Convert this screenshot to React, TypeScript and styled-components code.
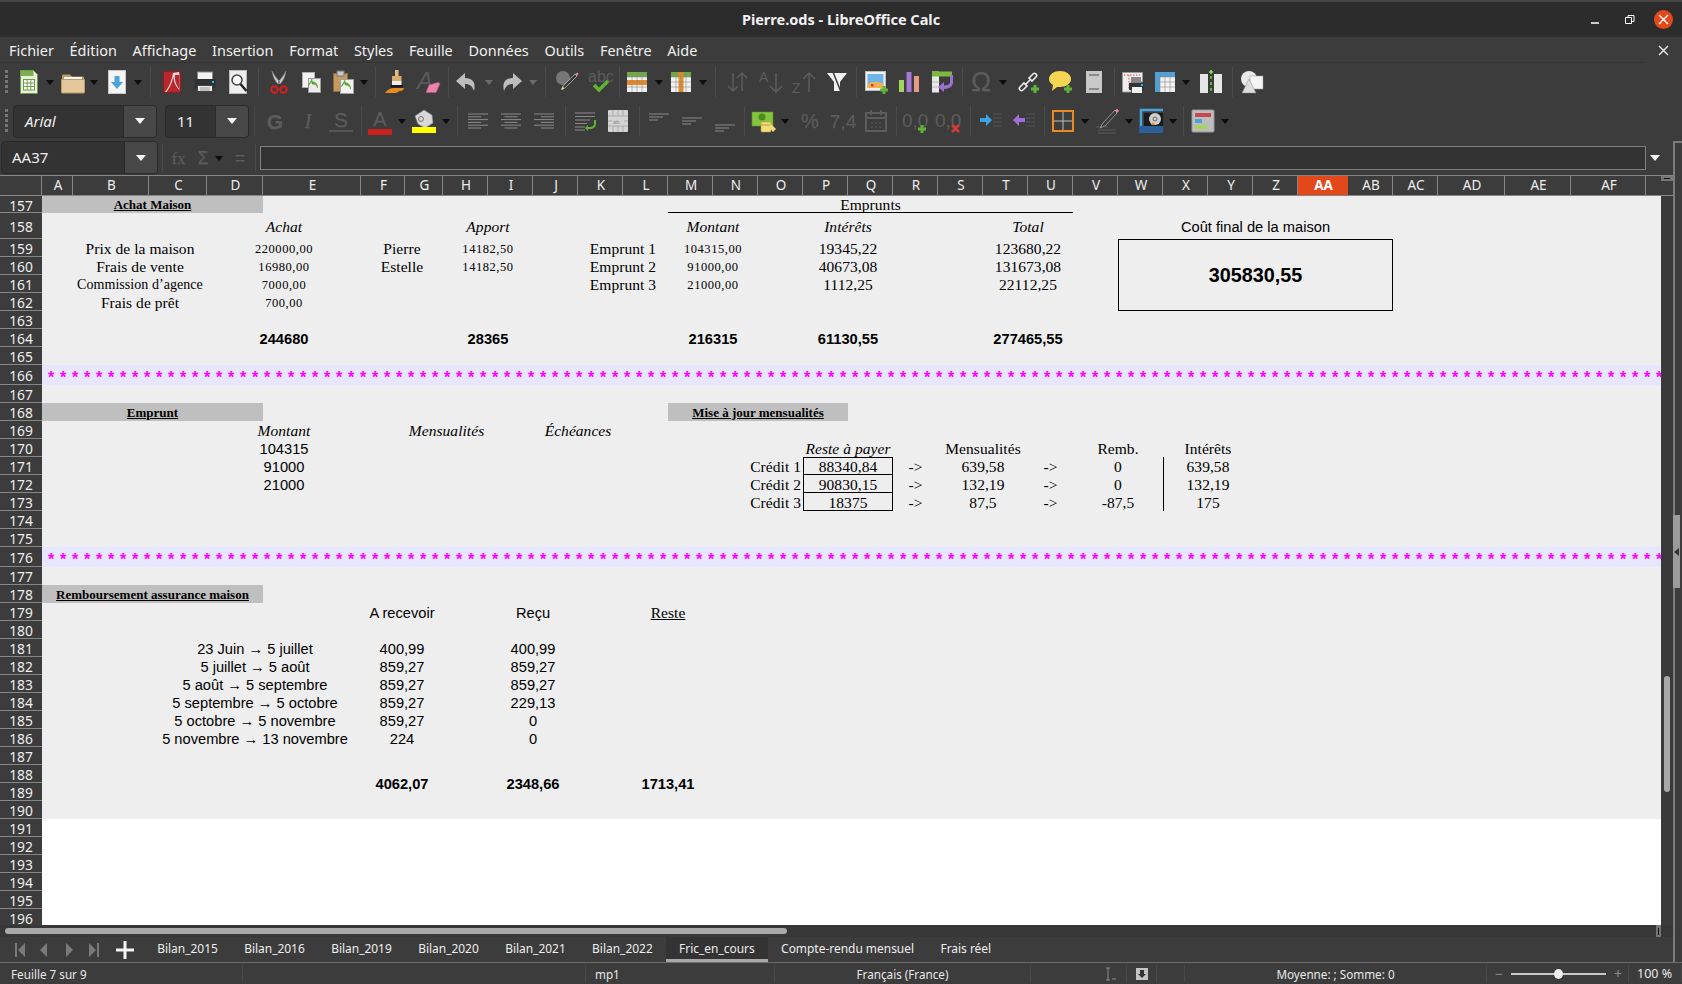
import React from "react";
import styled, { createGlobalStyle, css } from "styled-components";

const UI_FONT = `"Noto Sans", "Open Sans", sans-serif`;
const SERIF = `"Liberation Serif", serif`;
const SANS = `"Liberation Sans", sans-serif`;

const GlobalStyle = createGlobalStyle`
  html, body { margin: 0; padding: 0; background: #3c3c3c; }
  #root { width: 1682px; height: 984px; overflow: hidden; }
`;

const COLUMNS: [string, number][] = [
  ["A", 31], ["B", 76], ["C", 58], ["D", 56], ["E", 98], ["F", 44], ["G", 38], ["H", 45],
  ["I", 45], ["J", 45], ["K", 45], ["L", 45], ["M", 45], ["N", 45], ["O", 45], ["P", 45],
  ["Q", 45], ["R", 45], ["S", 45], ["T", 45], ["U", 45], ["V", 45], ["W", 45], ["X", 45],
  ["Y", 45], ["Z", 45], ["AA", 50], ["AB", 45], ["AC", 45], ["AD", 67], ["AE", 66], ["AF", 75],
];
const COL_NAMES = COLUMNS.map((c) => c[0]);

const rowHeight = (n: number) => (n === 157 ? 17 : n === 158 ? 26 : n === 166 || n === 176 ? 20 : 18);
const ROW_NUMBERS = Array.from({ length: 40 }, (_, i) => 157 + i);
const SHEET_ROWS = ROW_NUMBERS.filter((n) => n <= 190);

const App = styled.div`
  width: 1682px;
  height: 984px;
  display: flex;
  flex-direction: column;
  background: #3c3c3c;
  color: #eeeeee;
  font-family: ${UI_FONT};
  overflow: hidden;
`;

const TitleBar = styled.div`
  height: 37px;
  box-sizing: border-box;
  border-top: 2px solid #454545;
  padding-bottom: 2px;
  background: #2c2c2c;
  display: flex;
  align-items: center;
  justify-content: center;
  position: relative;
  font-size: 14.5px;
  font-weight: 700;
  color: #f2f2f2;
`;

const WindowButtons = styled.div`
  position: absolute;
  right: 9px;
  top: 0;
  height: 35px;
  display: flex;
  align-items: center;
  gap: 15px;
`;

const WinButton = styled.div<{ $close?: boolean }>`
  width: 19px;
  height: 19px;
  border-radius: 50%;
  display: flex;
  align-items: center;
  justify-content: center;
  background: ${(p) => (p.$close ? "#e2481a" : "transparent")};
`;

const MenuBar = styled.div`
  height: 26px;
  display: flex;
  align-items: center;
  padding-left: 9px;
  gap: 15.7px;
  position: relative;
  font-size: 14.45px;
  color: #f0f0f0;
  &::after {
    content: "";
    position: absolute;
    left: 0;
    width: 1645px;
    bottom: 0;
    height: 1px;
    background: #353535;
  }
`;

const MenuItem = styled.span`
  white-space: nowrap;
`;

const CloseDoc = styled.div`
  margin-left: auto;
  margin-right: 13px;
  display: flex;
`;

const ToolRow = styled.div<{ $h: number }>`
  height: ${(p) => p.$h}px;
  display: flex;
  align-items: center;
  padding-left: 5px;
`;

const Grip = styled.div<{ $mr: number }>`
  width: 3px;
  height: 24px;
  margin-right: ${(p) => p.$mr}px;
  background: repeating-linear-gradient(to bottom, #757575 0 3px, transparent 3px 5px);
`;

const Tool = styled.div<{ $w?: number }>`
  width: ${(p) => p.$w ?? 33}px;
  flex: none;
  height: 24px;
  display: flex;
  align-items: center;
  justify-content: center;
`;

const Drop = styled.div<{ $w?: number; $dim?: boolean }>`
  width: ${(p) => p.$w ?? 11}px;
  flex: none;
  height: 24px;
  display: flex;
  align-items: center;
  &::before {
    content: "";
    margin-left: 1px;
    border-left: 4px solid transparent;
    border-right: 4px solid transparent;
    border-top: 5px solid ${(p) => (p.$dim ? "#6c6c6c" : "#0c0c0c")};
  }
`;

const Sep = styled.div<{ $w: number }>`
  width: ${(p) => p.$w}px;
  flex: none;
  height: 30px;
  position: relative;
  &::after {
    content: "";
    position: absolute;
    left: 50%;
    top: 0;
    bottom: 0;
    width: 1px;
    background: #4a4a4a;
  }
`;

const Combo = styled.div<{ $w: number; $ml?: number; $mt?: number }>`
  width: ${(p) => p.$w}px;
  flex: none;
  margin-left: ${(p) => p.$ml ?? 0}px;
  margin-top: ${(p) => p.$mt ?? 0}px;
  box-sizing: border-box;
  border: 1px solid #2a2a2a;
  border-radius: 4px;
  background: #333333;
  display: flex;
  align-items: stretch;
  overflow: hidden;
  font-size: 15px;
  color: #eeeeee;
`;

const ComboText = styled.div<{ $it?: boolean; $pl: number; $h: number }>`
  flex: 1;
  height: ${(p) => p.$h}px;
  box-sizing: border-box;
  padding-bottom: 1px;
  display: flex;
  align-items: center;
  padding-left: ${(p) => p.$pl}px;
  font-style: ${(p) => (p.$it ? "italic" : "normal")};
`;

const ComboButton = styled.div`
  width: 32px;
  background: #484848;
  border-left: 1px solid #2a2a2a;
  display: flex;
  align-items: center;
  justify-content: center;
  &::before {
    content: "";
    border-left: 5.5px solid transparent;
    border-right: 5.5px solid transparent;
    border-top: 6px solid #f4f4f4;
  }
`;

const Glyph = styled.span<{ $it?: boolean; $bold?: boolean; $size?: number; $font?: string; $color?: string }>`
  font-family: ${(p) => p.$font ?? SANS};
  font-style: ${(p) => (p.$it ? "italic" : "normal")};
  font-weight: ${(p) => (p.$bold ? 700 : 400)};
  font-size: ${(p) => p.$size ?? 20}px;
  color: ${(p) => p.$color ?? "#5c5c5c"};
  line-height: 1;
  white-space: nowrap;
  text-shadow: 0 1px 0 rgba(255, 255, 255, 0.06);
`;

const ColorGlyph = styled.div`
  width: 24px;
  height: 24px;
  display: flex;
  flex-direction: column;
  align-items: center;
`;

const ColorBar = styled.div<{ $c: string; $h?: number; $mt?: number }>`
  width: 24px;
  height: ${(p) => p.$h ?? 6}px;
  margin-top: ${(p) => p.$mt ?? 0}px;
  flex: none;
  background: ${(p) => p.$c};
`;

const Workspace = styled.div`
  height: 821px;
  display: flex;
`;

const Main = styled.div`
  width: 1673px;
  display: flex;
  flex-direction: column;
`;

const RightStrip = styled.div`
  width: 9px;
  box-sizing: border-box;
  border-left: 2px solid #7b7b7b;
  border-top: 2px solid #7b7b7b;
  position: relative;
`;

const DeckHandle = styled.div`
  position: absolute;
  left: -2px;
  top: 372px;
  width: 7px;
  height: 73px;
  background: #9c9c9c;
  display: flex;
  align-items: center;
  justify-content: center;
  &::before {
    content: "";
    border-top: 4px solid transparent;
    border-bottom: 4px solid transparent;
    border-right: 5px solid #333333;
  }
`;

const FormulaBar = styled.div`
  height: 34px;
  display: flex;
  align-items: center;
  padding-left: 1px;
`;

const FxButton = styled.div<{ $w: number }>`
  width: ${(p) => p.$w}px;
  flex: none;
  display: flex;
  justify-content: center;
`;

const FormulaSep = styled.div<{ $w: number }>`
  width: ${(p) => p.$w}px;
  flex: none;
  height: 28px;
  position: relative;
  &::after {
    content: "";
    position: absolute;
    left: 50%;
    top: 0;
    bottom: 0;
    width: 1px;
    background: #4a4a4a;
  }
`;

const FormulaInput = styled.div`
  width: 1386px;
  flex: none;
  height: 24px;
  box-sizing: border-box;
  border: 1px solid #7f7f7f;
  background: #333333;
`;

const FormulaDrop = styled.div`
  margin-left: 4px;
  border-left: 5.5px solid transparent;
  border-right: 5.5px solid transparent;
  border-top: 6px solid #f4f4f4;
`;

const ColHeaderRow = styled.div`
  height: 21px;
  box-sizing: border-box;
  border-top: 1px solid #868686;
  border-bottom: 1px solid #868686;
  display: flex;
  position: relative;
`;

const Corner = styled.div`
  width: 42px;
  flex: none;
  border-right: 1px solid #868686;
  box-sizing: border-box;
`;

const ColLabel = styled.div<{ $w: number; $on?: boolean }>`
  width: ${(p) => p.$w}px;
  flex: none;
  box-sizing: border-box;
  padding-left: 2px;
  border-right: 1px solid ${(p) => (p.$on ? "#e2481a" : "#868686")};
  background: ${(p) => (p.$on ? "#e2481a" : "transparent")};
  color: ${(p) => (p.$on ? "#ffffff" : "#eeeeee")};
  font-weight: ${(p) => (p.$on ? 700 : 400)};
  font-size: 13.5px;
  line-height: 19px;
  text-align: center;
`;

const SplitHandle = styled.div`
  position: absolute;
  left: 1661px;
  top: 0;
  width: 12px;
  height: 5px;
  background: #767676;
  display: flex;
  align-items: center;
  justify-content: center;
  &::before {
    content: "";
    width: 6px;
    height: 1px;
    background: #111111;
  }
`;

const SheetArea = styled.div`
  height: 729px;
  display: flex;
  overflow: hidden;
`;

const RowHeaders = styled.div`
  width: 42px;
  flex: none;
  display: flex;
  flex-direction: column;
`;

const RowLabel = styled.div<{ $h: number }>`
  height: ${(p) => p.$h}px;
  flex: none;
  box-sizing: border-box;
  border-bottom: 1px solid #868686;
  padding-top: 2px;
  display: flex;
  align-items: center;
  justify-content: center;
  font-size: 13.8px;
  color: #eeeeee;
`;

const Sheet = styled.div`
  width: 1619px;
  flex: none;
  background: #ffffff;
`;

const SheetGrid = styled.div`
  display: grid;
  grid-template-columns: ${COLUMNS.map((c) => `${c[1]}px`).join(" ")} 15px;
  grid-template-rows: ${SHEET_ROWS.map((n) => `${rowHeight(n)}px`).join(" ")};
  background: #eeeeee;
  color: #000000;
  white-space: nowrap;
`;

type CellProps = { $c: string; $s?: number; $r: number; $rs?: number };

const cellPlace = css<CellProps>`
  grid-column: ${(p) => COL_NAMES.indexOf(p.$c) + 1} / span ${(p) => p.$s ?? 1};
  grid-row: ${(p) => p.$r - 156} / span ${(p) => p.$rs ?? 1};
  box-sizing: border-box;
  padding-top: 2px;
  display: flex;
  align-items: center;
  justify-content: center;
`;

const Serif = styled.div<CellProps>`
  ${cellPlace};
  font-family: ${SERIF};
  font-size: 15.5px;
  letter-spacing: 0.05px;
`;

const SerifItalic = styled(Serif)`
  font-style: italic;
`;

const SmallSerif = styled(Serif)`
  font-size: 12.5px;
  letter-spacing: 0.55px;
`;

const NarrowSerif = styled(Serif)`
  font-size: 14px;
`;

const CreditLabel = styled(Serif)`
  justify-content: flex-end;
  padding-right: 2px;
`;

const Sans = styled.div<CellProps>`
  ${cellPlace};
  font-family: ${SANS};
  font-size: 14.67px;
`;

const SansBold = styled(Sans)`
  font-weight: 700;
`;

const SectionHead = styled.div<CellProps>`
  ${cellPlace};
  padding-top: 1px;
  background: #bfbfbf;
  font-family: ${SERIF};
  font-size: 13px;
  font-weight: 700;
  text-decoration: underline;
`;

const UnderlinedSerif = styled(Serif)`
  text-decoration: underline;
`;

const RuledHead = styled(Serif)`
  border-bottom: 1px solid #000000;
`;

const CostBox = styled(SansBold)`
  border: 1px solid #000000;
  padding-top: 0;
  font-size: 19.8px;
`;

const CreditBox = styled(Serif)<{ $top?: boolean }>`
  border: 1px solid #000000;
  border-top-width: ${(p) => (p.$top ? 1 : 0)}px;
`;

const RuleCell = styled.div<CellProps>`
  ${cellPlace};
  justify-content: flex-start;
  align-items: stretch;
  border-left: 1px solid #000000;
`;

const StarBand = styled.div<{ $r: number }>`
  grid-column: 1 / -1;
  grid-row: ${(p) => p.$r - 156};
  background: #e6e6ff;
  color: #ff00ff;
  font-family: ${SANS};
  font-weight: 700;
  font-size: 16px;
  letter-spacing: 0.664px;
  line-height: 26px;
  padding-left: 6px;
  overflow: hidden;
  white-space: pre;
`;

const VScroll = styled.div`
  width: 12px;
  flex: none;
  background: #3a3a3a;
  box-sizing: border-box;
  padding: 480px 3px 0;
`;

const VThumb = styled.div`
  height: 116px;
  border-radius: 3px;
  background: #a8a8a8;
`;

const HScrollRow = styled.div`
  height: 12px;
  flex: none;
  background: #373737;
  display: flex;
  align-items: center;
  padding-left: 5px;
`;

const HThumb = styled.div`
  width: 782px;
  height: 6px;
  border-radius: 3px;
  background: #a9a9a9;
`;

const HHandle = styled.div`
  width: 5px;
  height: 12px;
  margin-left: auto;
  margin-right: 12px;
  background: #767676;
  display: flex;
  align-items: center;
  justify-content: center;
  &::before {
    content: "";
    width: 1px;
    height: 7px;
    background: #111111;
  }
`;

const TabBar = styled.div`
  height: 25px;
  flex: none;
  display: flex;
  align-items: stretch;
  font-size: 11.95px;
`;

const TabNav = styled.div`
  width: 144px;
  flex: none;
  display: flex;
  align-items: center;
  padding-left: 14px;
  box-sizing: border-box;
`;

const NavButton = styled.div<{ $w: number }>`
  width: ${(p) => p.$w}px;
  flex: none;
  display: flex;
`;

const AddTab = styled.div`
  margin-left: 4px;
  display: flex;
`;

const Tab = styled.div<{ $active?: boolean }>`
  padding: 1px 13.2px 0;
  display: flex;
  align-items: center;
  box-sizing: border-box;
  white-space: nowrap;
  color: #eeeeee;
  background: ${(p) => (p.$active ? "#333333" : "transparent")};
  border-bottom: 3px solid ${(p) => (p.$active ? "#a8a8a8" : "transparent")};
`;

const StatusBar = styled.div`
  height: 22px;
  box-sizing: border-box;
  border-top: 1px solid #6e6e6e;
  display: flex;
  align-items: center;
  font-size: 11.7px;
  color: #e8e8e8;
`;

const StatusCell = styled.div<{ $w: number; $center?: boolean; $pl?: number; $fs?: number }>`
  width: ${(p) => p.$w}px;
  flex: none;
  height: 17px;
  box-sizing: border-box;
  border-right: 1px solid #484848;
  display: flex;
  align-items: center;
  justify-content: ${(p) => (p.$center ? "center" : "flex-start")};
  padding-left: ${(p) => p.$pl ?? 0}px;
  font-size: ${(p) => (p.$fs ? `${p.$fs}px` : "inherit")};
  white-space: nowrap;
  gap: 6px;
`;

const ZoomTrack = styled.div`
  width: 95px;
  height: 2px;
  margin: 0 2px;
  background: #c8c8c8;
  position: relative;
`;

const ZoomKnob = styled.div`
  position: absolute;
  left: 43px;
  top: -4px;
  width: 9px;
  height: 10px;
  border-radius: 50%;
  background: #eeeeee;
`;

const ZoomSign = styled.span`
  color: #8c8c8c;
  font-size: 14px;
  line-height: 1;
`;

const Svg = styled.svg.attrs({ viewBox: "0 0 24 24", width: 24, height: 24 })`
  display: block;
  flex: none;
  overflow: visible;
`;

const Grey = "#5c5c5c";

const NewCalcIcon = () => (
  <Svg>
    <path d="M3.5.5h13l4 4v19h-17z" fill="#e9efdf" stroke="#6d9e49" />
    <path d="M4 1h12.5v5H4z" fill="#7fae4f" />
    <rect x="6.5" y="9.5" width="11" height="10.5" fill="#fff" stroke="#6d9e49" />
    <path d="M6.5 13h11M6.5 16.5h11M10.2 9.5v10.5M13.8 9.5v10.5" stroke="#6d9e49" fill="none" />
  </Svg>
);

const FolderIcon = () => (
  <Svg>
    <path d="M1 5.5a1 1 0 0 1 1-1h7l2 2h11a1 1 0 0 1 1 1V10H1z" fill="#b89968" />
    <rect x="3" y="7" width="18" height="4" fill="#f4f4f4" />
    <path d="M.5 9.5h23V22a1 1 0 0 1-1 1H1.5a1 1 0 0 1-1-1z" fill="#e4c79a" stroke="#b89968" />
  </Svg>
);

const SaveIcon = () => (
  <Svg>
    <rect x="3.5" y=".5" width="17" height="23" fill="#f4f4f4" stroke="#c8c8c8" />
    <path d="M9.5 6h5v6h3.500L12 19l-6-7h3.500z" fill="#4aa3df" />
  </Svg>
);

const PdfIcon = () => (
  <Svg>
    <rect x="3.5" y="1.5" width="17" height="21" fill="#b8272c" stroke="#8f1c20" />
    <path d="M19 2l-6 1c-1 6-3 13-8 19h1.500c4-5 6-11 7-16 0 5 2 11 6 14V6z" fill="#f2dcdc" />
    <path d="M15 5c-.5 4 .5 10 4.500 14V5z" fill="#b8272c" />
  </Svg>
);

const PrintIcon = () => (
  <Svg>
    <rect x="4.500" y="2" width="15" height="8" fill="#f4f4f4" stroke="#888" />
    <path d="M1.500 11a2 2 0 0 1 2-2h17a2 2 0 0 1 2 2v7h-21z" fill="#2c3136" />
    <rect x="19" y="11" width="2" height="2" fill="#33b5e5" />
    <rect x="4.500" y="15.500" width="15" height="6" fill="#e8e8e8" stroke="#444" />
    <path d="M7 18h10M7 20h10" stroke="#999" />
  </Svg>
);

const PreviewIcon = () => (
  <Svg>
    <rect x="3.500" y=".5" width="17" height="23" fill="#eeeeee" stroke="#bbbbbb" />
    <circle cx="11" cy="10" r="5" fill="#f8f8f8" stroke="#444" strokeWidth="1.500" />
    <path d="M14.500 14l6 7" stroke="#222" strokeWidth="2.500" />
  </Svg>
);

const CutIcon = () => (
  <Svg>
    <path d="M5 1c1 6 3 10 6 13l2-2C10 9 7 5 5 1zM19 1c-1 6-3 10-6 13l-2-2c3-3 6-7 8-11z" fill="#c8c8c8" stroke="#8a8a8a" strokeWidth=".5" />
    <circle cx="7.500" cy="19.500" r="3.200" fill="none" stroke="#d81f1f" strokeWidth="2" />
    <circle cx="16.500" cy="19.500" r="3.200" fill="none" stroke="#d81f1f" strokeWidth="2" />
  </Svg>
);

const greenArrow = "M8 15l4-4.500v2.500c3 0 5 1 5.500 4 .3-3-1-6-5.500-6.500V8z";

const CopyIcon = () => (
  <Svg>
    <rect x="3.500" y="2.500" width="12" height="15" fill="#f4f4f4" stroke="#b0b0b0" />
    <rect x="9.500" y="8.500" width="12" height="14" fill="#ececec" stroke="#9c9c9c" />
    <path d={greenArrow} fill="#5fb336" stroke="#3f8a1e" strokeWidth=".4" transform="translate(1 1)" />
  </Svg>
);

const PasteIcon = () => (
  <Svg>
    <rect x="2.500" y="3.500" width="14" height="18" fill="#c49a5e" stroke="#8e6c3c" />
    <rect x="6" y="1" width="7" height="5" fill="#c8c8c8" stroke="#777" />
    <rect x="9.500" y="9.500" width="13" height="14" fill="#f2f2f2" stroke="#a0a0a0" />
    <path d={greenArrow} fill="#5fb336" stroke="#3f8a1e" strokeWidth=".4" transform="translate(2 2)" />
  </Svg>
);

const CloneIcon = () => (
  <Svg>
    <rect x="11" y="0" width="3.500" height="6" fill="#e3be84" />
    <path d="M8 6h9.500v5H8z" fill="#d9ae6c" />
    <rect x="8" y="11" width="9.500" height="4" fill="#eeeeee" />
    <rect x="6.500" y="15" width="12.500" height="2.500" fill="#1c1c1c" />
    <path d="M1 23c2-3 5-5 9-5h10c0 2-2 3-4 3-1 0-3 2-5 2z" fill="#e98a1f" />
  </Svg>
);

const ClearIcon = () => (
  <Svg>
    <text x="0" y="19" fontFamily={SANS} fontSize="24" fontStyle="italic" fill="#5a5a5a">A</text>
    <path d="M12 15l9-2.500 2 1-4 9H9z" fill="#ee82ac" stroke="#c85a88" strokeWidth=".6" />
  </Svg>
);

const UndoIcon = ({ flip }: { flip?: boolean }) => (
  <Svg>
    <path
      transform={flip ? "matrix(-1 0 0 1 24 0)" : undefined}
      d="M10 3L1 11l9 8v-5c5 0 7 2 9 7 2-8-1-13-9-13z"
      fill="#bdbdbd"
    />
  </Svg>
);

const FindIcon = () => (
  <Svg>
    <circle cx="8" cy="8" r="7" fill="#777777" />
    <path d="M22 6l-12 12-3 1 1-3L20 4z" fill="#3a3a3a" stroke="#ddd" strokeWidth=".6" />
    <path d="M20 4l2.500-1.500 1 1.500-1.500 2z" fill="#ee82ac" />
    <path d="M8 16l-2 4 3-1z" fill="#f0e0a0" />
  </Svg>
);

const SpellIcon = () => (
  <Svg>
    <text x="0" y="12" fontFamily={SANS} fontSize="16" fill={Grey}>abc</text>
    <path d="M6 15l5 5 9-9" fill="none" stroke="#5fb336" strokeWidth="3.500" />
  </Svg>
);

const TableIcon = ({ mode }: { mode: "row" | "col" | "freeze" }) => {
  const head = mode === "freeze" ? "#4aa3df" : "#6fa845";
  return (
    <Svg>
      <rect x="2" y="2" width="20" height="20" fill="#f2f2f2" />
      <rect x="2" y="2" width="20" height="5" fill={head} />
      {mode === "row" && <rect x="2" y="10" width="20" height="5" fill="#ed8a1f" />}
      {mode === "col" && <rect x="9.500" y="2" width="5" height="20" fill="#ed8a1f" />}
      {mode === "freeze" && <rect x="2" y="2" width="5" height="20" fill="#4aa3df" />}
      <path d="M2 7h20M2 12h20M2 17h20M7 2v20M12 2v20M17 2v20" stroke="#8a8a8a" strokeWidth=".6" />
    </Svg>
  );
};

const SortIcon = () => (
  <Svg>
    <path d="M7 3v18M2 16l5 5 5-5M16 21V3M11 8l5-5 5 5" fill="none" stroke={Grey} strokeWidth="1.500" />
  </Svg>
);

const SortAscIcon = ({ letter, up }: { letter: string; up?: boolean }) => (
  <Svg>
    <text x="0" y={up ? 23 : 12} fontFamily={SANS} fontSize="14" fill={Grey}>{letter}</text>
    {up ? (
      <path d="M17 22V3M11 9l6-6 6 6" fill="none" stroke={Grey} strokeWidth="1.500" />
    ) : (
      <path d="M17 3v19M11 16l6 6 6-6" fill="none" stroke={Grey} strokeWidth="1.500" />
    )}
  </Svg>
);

const FilterIcon = () => (
  <Svg>
    <path d="M2 3h20l-7 9v9H9v-9z" fill="#f2f2f2" />
    <path d="M8 2l8 20" stroke="#3c3c3c" strokeWidth="1.500" />
  </Svg>
);

const PlusMark = ({ x = 16, y = 16, c = "#5fb336" }: { x?: number; y?: number; c?: string }) => (
  <path d={`M${x + 2.5} ${y}h3v2.500h2.500v3H${x + 5.5}v2.500h-3v-2.500H${x}v-3h2.500z`} fill={c} />
);

const ImageIcon = () => (
  <Svg>
    <rect x="1.500" y="1.500" width="20" height="19" fill="#f2f2f2" stroke="#bbb" />
    <rect x="3.500" y="4" width="16" height="14" fill="#6db4e8" />
    <path d="M3.500 18v-4c5-3 11-3 16 0v4z" fill="#f0b050" />
    <rect x="7" y="14" width="2.500" height="2.500" fill="#d33" />
    <PlusMark />
  </Svg>
);

const ChartIcon = () => (
  <Svg>
    <rect x="2" y="10" width="5" height="12" fill="#a3d45c" />
    <rect x="9.500" y="2" width="5" height="20" fill="#a678d8" />
    <rect x="17" y="6" width="5" height="16" fill="#e89a84" />
  </Svg>
);

const PivotIcon = () => (
  <Svg>
    <rect x="2" y="1.500" width="7" height="21" fill="#e8e8e8" />
    <rect x="2" y="1.500" width="20" height="5" fill="#7fb83f" />
    <path d="M9 12h1M9 17h1M2 12h7M2 17h7" stroke="#999" strokeWidth=".6" />
    <path d="M20 7v7c0 2.500-3 3.500-6 3.500V14l-6 5 6 5v-3c6 0 9-3 9-7V7z" transform="translate(0 -2)" fill="#9a70d0" />
  </Svg>
);

const LinkIcon = () => (
  <Svg>
    <path d="M4 17l4-4 3 3-4 4a2.100 2.100 0 0 1-3-3zM13 8l4-4a2.100 2.100 0 0 1 3 3l-4 4z" fill="none" stroke="#ececec" strokeWidth="1.600" />
    <path d="M9 15l6-6" stroke="#ececec" strokeWidth="1.600" />
    <PlusMark x={15} y={15} />
  </Svg>
);

const CommentIcon = () => (
  <Svg>
    <path d="M11 1c6 0 11 3.500 11 8s-5 8-11 8H8l-5 4 1-6C1.500 13.500 0 11.500 0 9c0-4.500 5-8 11-8z" fill="#f5d552" />
    <PlusMark x={15} y={15} />
  </Svg>
);

const HeaderIcon = () => (
  <Svg>
    <rect x="4" y="1" width="16" height="22" fill="#c8c8c8" />
    <path d="M7 5h10M7 19h10" stroke="#8a8a8a" strokeWidth="2" />
  </Svg>
);

const PrintAreaIcon = () => (
  <Svg>
    <path d="M1.500 2.500h20V12H10v10H1.500z" fill="#eeeeee" stroke="#999" />
    <path d="M3 5h16M8 5v15" stroke="#dd4444" strokeDasharray="1.500 1.500" />
    <rect x="10" y="7" width="10" height="6" fill="#888" />
    <rect x="8" y="13" width="15" height="7" fill="#30353a" />
    <rect x="11" y="17" width="10" height="6" fill="#f2f2f2" />
    <rect x="20" y="14" width="2" height="2" fill="#33b5e5" />
  </Svg>
);

const SplitIcon = () => (
  <Svg>
    <rect x="1" y="4" width="8" height="19" fill="#e6e6e6" />
    <rect x="15" y="4" width="8" height="19" fill="#e6e6e6" />
    <path d="M12 0v24" stroke="#5fb336" strokeWidth="2" strokeDasharray="3 3" />
    <path d="M10 2h4M12 0v4" stroke="#8fd94f" strokeWidth="1.500" />
  </Svg>
);

const ShapesIcon = () => (
  <Svg>
    <circle cx="9" cy="9" r="8" fill="#e8e8e8" />
    <rect x="10" y="6" width="13" height="13" fill="#f4f4f4" stroke="#999" strokeWidth=".5" />
    <path d="M9 9l7 14H2z" fill="#dddddd" stroke="#888" strokeWidth=".5" />
  </Svg>
);

const BucketIcon = () => (
  <Svg>
    <path d="M3 7l9-6 8 5 1 8-8 5-7-4z" fill="#d8d8d8" stroke="#888" strokeWidth=".6" />
    <circle cx="9" cy="10" r="2.500" fill="none" stroke="#777" />
    <path d="M12 19l2 4h-4z" fill="#ef8a1f" />
  </Svg>
);

const AlignIcon = ({ a }: { a: "l" | "c" | "r" }) => {
  const rows = [20, 13, 20, 13, 20, 13].map((w, i) => {
    const x = a === "l" ? 2 : a === "c" ? 12 - w / 2 : 22 - w;
    return <path key={i} d={`M${x} ${5 + i * 2.8}h${w}`} stroke="#8a8a8a" strokeWidth="1" />;
  });
  return <Svg>{rows}</Svg>;
};

const WrapIcon = () => (
  <Svg>
    <path d="M2 4h20M2 7.500h20M2 11h15M2 14.500h12M2 18h10M2 21h10" stroke="#8a8a8a" />
    <path d="M21 12v4c0 2-2 3-4 3h-2v-2l-3 3 3 3v-2h2c3 0 6-2 6-5v-4z" fill="#5fb336" transform="translate(0 -1)" />
  </Svg>
);

const MergeIcon = () => (
  <Svg>
    <rect x="2" y="1" width="20" height="22" rx="1" fill="#d4d4d4" />
    <path d="M2 7h20M2 12h4M18 12h4M2 17h20M7 1v6M12 1v6M17 1v6M7 17v6M12 17v6M17 17v6" stroke="#aaa" />
    <text x="7" y="15" fontSize="6" fontFamily={SANS} fill="#888">ab</text>
  </Svg>
);

const VAlignIcon = ({ y }: { y: number }) => (
  <Svg>
    <path d={`M2 ${y}h20M2 ${y + 3}h14M2 ${y + 6}h9`} stroke="#8a8a8a" />
  </Svg>
);

const CurrencyIcon = () => (
  <Svg>
    <rect x="0" y="3" width="21" height="14" fill="#86c440" stroke="#5c9426" strokeWidth=".6" />
    <circle cx="10" cy="8" r="3.500" fill="#4d8a1e" />
    <rect x="9" y="13" width="10" height="10" rx="1" fill="#f4dd80" stroke="#b89c30" strokeWidth=".6" />
    <path d="M9 16h10" stroke="#b89c30" />
    <path d="M19 15l5 5-3 3-4-5z" fill="#f2d878" />
  </Svg>
);

const DateIcon = () => (
  <Svg>
    <rect x="2" y="4" width="20" height="18" fill="none" stroke={Grey} strokeWidth="2" />
    <path d="M7 1v5M17 1v5M3 9h18" stroke={Grey} strokeWidth="2" />
    <path d="M7 14h2M11 14h2M15 14h2M7 18h2M11 18h2M15 18h2" stroke={Grey} />
  </Svg>
);

const DecIcon = ({ add }: { add?: boolean }) => (
  <Svg>
    <text x="-1" y="18" fontSize="19" fontFamily={SANS} fill={Grey}>0,0</text>
    {add ? <PlusMark x={15} y={16} /> : <path d="M16 16l7 7M23 16l-7 7" stroke="#d43a3a" strokeWidth="2.500" />}
  </Svg>
);

const IndentIcon = ({ out }: { out?: boolean }) => (
  <Svg>
    <path d="M14 5h9M14 9h9M14 13h9M14 17h9" stroke="#575757" strokeWidth="1.200" />
    <path d={out ? "M1 11l6-6v4h6v4H7v4z" : "M13 11l-6-6v4H1v4h6v4z"} fill={out ? "#a06fd8" : "#3aa3e3"} />
  </Svg>
);

const BorderIcon = () => (
  <Svg>
    <rect x="2" y="2" width="20" height="20" fill="none" stroke="#ed8a1f" strokeWidth="2" />
    <path d="M12 3v18M3 12h18" stroke="#bdbdbd" />
  </Svg>
);

const LineStyleIcon = () => (
  <Svg>
    <path d="M20 1L8 14l-3 5 5-2L22 4z" fill="#3a3a3a" stroke="#ccc" strokeWidth=".6" />
    <path d="M20 1l2.500-1 1.500 2-2 2z" fill="#ee82ac" />
    <path d="M5 19l1-2 1 1z" fill="#f0e0a0" />
    <path d="M1 18h12M3 21h18M3 24h18" stroke="#5a5a5a" />
  </Svg>
);

const LineColorIcon = () => (
  <Svg>
    <path d="M2 17V1h22" fill="none" stroke="#4aa3df" strokeWidth="2.500" />
    <rect x="5" y="4" width="19" height="13" fill="#1c1c1c" />
    <circle cx="16" cy="10" r="6" fill="#cfcfcf" />
    <circle cx="16" cy="10" r="2" fill="none" stroke="#666" />
    <path d="M12 16l2-3 2 3z" fill="#ef8a1f" />
    <rect x="0" y="17" width="24" height="7" fill="#2a6099" />
  </Svg>
);

const CondIcon = () => (
  <Svg>
    <rect x="1" y="1" width="22" height="22" rx="1" fill="#bdbdbd" stroke="#999" />
    <rect x="4" y="4" width="16" height="4" fill="#c9474a" />
    <rect x="4" y="10" width="7" height="4" fill="#4aa3df" />
    <rect x="4" y="16" width="12" height="4" fill="#a3d45c" />
  </Svg>
);

const CloseMark = ({ c = "#ffffff", s = 11 }: { c?: string; s?: number }) => (
  <svg width={s} height={s} viewBox="0 0 11 11">
    <path d="M1 1l9 9M10 1l-9 9" stroke={c} strokeWidth="1.400" />
  </svg>
);

const NavIcon = ({ d }: { d: string }) => (
  <svg width="12" height="16" viewBox="0 0 12 16">
    <path d={d} fill="#7a7a7a" />
  </svg>
);

const TAB_NAMES = [
  "Bilan_2015", "Bilan_2016", "Bilan_2019", "Bilan_2020", "Bilan_2021", "Bilan_2022",
  "Fric_en_cours", "Compte-rendu mensuel", "Frais réel",
];

// the last star is cut by the sheet's right edge, as in the window
const STARS = Array(135).fill("*").join(" ");

const REFUND_ROWS = [
  [181, "23 Juin → 5 juillet", "400,99", "400,99"],
  [182, "5 juillet → 5 août", "859,27", "859,27"],
  [183, "5 août → 5 septembre", "859,27", "859,27"],
  [184, "5 septembre → 5 octobre", "859,27", "229,13"],
  [185, "5 octobre → 5 novembre", "859,27", "0"],
  [186, "5 novembre → 13 novembre", "224", "0"],
] as const;

const CREDIT_ROWS = [
  [171, "Crédit 1", "88340,84", "639,58", "0", "639,58"],
  [172, "Crédit 2", "90830,15", "132,19", "0", "132,19"],
  [173, "Crédit 3", "18375", "87,5", "-87,5", "175"],
] as const;

function ToolbarTop() {
  return (
    <ToolRow $h={38}>
      <Grip $mr={4} />
      <Tool><NewCalcIcon /></Tool><Drop />
      <Tool><FolderIcon /></Tool><Drop />
      <Tool><SaveIcon /></Tool><Drop />
      <Sep $w={11} />
      <Tool><PdfIcon /></Tool>
      <Tool><PrintIcon /></Tool>
      <Tool><PreviewIcon /></Tool>
      <Sep $w={8} />
      <Tool><CutIcon /></Tool>
      <Tool $w={31}><CopyIcon /></Tool>
      <Tool><PasteIcon /></Tool><Drop />
      <Sep $w={9} />
      <Tool><CloneIcon /></Tool>
      <Tool><ClearIcon /></Tool>
      <Sep $w={5.5} />
      <Tool><UndoIcon /></Tool><Drop $dim />
      <Tool><UndoIcon flip /></Tool><Drop $dim />
      <Sep $w={12} />
      <Tool><FindIcon /></Tool>
      <Tool><SpellIcon /></Tool>
      <Sep $w={4} />
      <Tool><TableIcon mode="row" /></Tool><Drop />
      <Tool><TableIcon mode="col" /></Tool><Drop />
      <Sep $w={12.5} />
      <Tool><SortIcon /></Tool>
      <Tool><SortAscIcon letter="A" /></Tool>
      <Tool><SortAscIcon letter="Z" up /></Tool>
      <Tool><FilterIcon /></Tool>
      <Sep $w={6.5} />
      <Tool><ImageIcon /></Tool>
      <Tool><ChartIcon /></Tool>
      <Tool><PivotIcon /></Tool>
      <Sep $w={6} />
      <Tool><Glyph $size={27}>Ω</Glyph></Tool><Drop $w={14} />
      <Tool><LinkIcon /></Tool>
      <Tool><CommentIcon /></Tool>
      <Tool><HeaderIcon /></Tool>
      <Sep $w={7} />
      <Tool $w={30.5}><PrintAreaIcon /></Tool>
      <Tool><TableIcon mode="freeze" /></Tool><Drop $w={13.5} />
      <Tool><SplitIcon /></Tool>
      <Sep $w={8} />
      <Tool><ShapesIcon /></Tool>
    </ToolRow>
  );
}

function ToolbarBottom() {
  return (
    <ToolRow $h={40}>
      <Grip $mr={5} />
      <Combo $w={143.5}>
        <ComboText $it $pl={11} $h={31}>Arial</ComboText>
        <ComboButton />
      </Combo>
      <Combo $w={84} $ml={8.5}>
        <ComboText $pl={11} $h={31}>11</ComboText>
        <ComboButton />
      </Combo>
      <Sep $w={9.5} />
      <Tool><Glyph $bold $size={21}>G</Glyph></Tool>
      <Tool><Glyph $it $size={21} $font={SERIF}>I</Glyph></Tool>
      <Tool>
        <ColorGlyph>
          <Glyph $size={21}>S</Glyph>
          <ColorBar $c="#555555" $h={2} />
        </ColorGlyph>
      </Tool>
      <Sep $w={6} />
      <Tool>
        <ColorGlyph>
          <Glyph $size={20}>A</Glyph>
          <ColorBar $c="#c9211e" />
        </ColorGlyph>
      </Tool>
      <Drop />
      <Tool>
        <ColorGlyph>
          <BucketIcon />
          <ColorBar $c="#ffff00" $mt={-6} />
        </ColorGlyph>
      </Tool>
      <Drop />
      <Sep $w={10} />
      <Tool><AlignIcon a="l" /></Tool>
      <Tool><AlignIcon a="c" /></Tool>
      <Tool><AlignIcon a="r" /></Tool>
      <Sep $w={8} />
      <Tool><WrapIcon /></Tool>
      <Tool><MergeIcon /></Tool>
      <Sep $w={8} />
      <Tool><VAlignIcon y={5} /></Tool>
      <Tool><VAlignIcon y={9} /></Tool>
      <Tool><VAlignIcon y={16} /></Tool>
      <Sep $w={5.5} />
      <Tool><CurrencyIcon /></Tool><Drop $w={13.5} />
      <Tool><Glyph $size={20}>%</Glyph></Tool>
      <Tool><Glyph $size={19}>7,4</Glyph></Tool>
      <Tool><DateIcon /></Tool>
      <Sep $w={6} />
      <Tool><DecIcon add /></Tool>
      <Tool><DecIcon /></Tool>
      <Sep $w={10} />
      <Tool><IndentIcon /></Tool>
      <Tool><IndentIcon out /></Tool>
      <Sep $w={6} />
      <Tool><BorderIcon /></Tool><Drop />
      <Tool><LineStyleIcon /></Tool><Drop />
      <Tool><LineColorIcon /></Tool><Drop />
      <Sep $w={8} />
      <Tool><CondIcon /></Tool><Drop />
    </ToolRow>
  );
}

function SheetContent() {
  return (
    <SheetGrid>
      <SectionHead $c="A" $s={4} $r={157}>Achat Maison</SectionHead>
      <RuledHead $c="M" $s={9} $r={157}>Emprunts</RuledHead>

      <SerifItalic $c="D" $s={2} $r={158}>Achat</SerifItalic>
      <SerifItalic $c="H" $s={2} $r={158}>Apport</SerifItalic>
      <SerifItalic $c="M" $s={2} $r={158}>Montant</SerifItalic>
      <SerifItalic $c="P" $s={2} $r={158}>Intérêts</SerifItalic>
      <SerifItalic $c="T" $s={2} $r={158}>Total</SerifItalic>
      <Sans $c="W" $s={6} $r={158}>Coût final de la maison</Sans>
      <CostBox $c="W" $s={6} $r={159} $rs={4}>305830,55</CostBox>

      <Serif $c="B" $s={2} $r={159}>Prix de la maison</Serif>
      <Serif $c="B" $s={2} $r={160}>Frais de vente</Serif>
      <NarrowSerif $c="B" $s={2} $r={161}>Commission d’agence</NarrowSerif>
      <Serif $c="B" $s={2} $r={162}>Frais de prêt</Serif>
      <SmallSerif $c="D" $s={2} $r={159}>220000,00</SmallSerif>
      <SmallSerif $c="D" $s={2} $r={160}>16980,00</SmallSerif>
      <SmallSerif $c="D" $s={2} $r={161}>7000,00</SmallSerif>
      <SmallSerif $c="D" $s={2} $r={162}>700,00</SmallSerif>
      <Serif $c="F" $s={2} $r={159}>Pierre</Serif>
      <Serif $c="F" $s={2} $r={160}>Estelle</Serif>
      <SmallSerif $c="H" $s={2} $r={159}>14182,50</SmallSerif>
      <SmallSerif $c="H" $s={2} $r={160}>14182,50</SmallSerif>
      <Serif $c="K" $s={2} $r={159}>Emprunt 1</Serif>
      <Serif $c="K" $s={2} $r={160}>Emprunt 2</Serif>
      <Serif $c="K" $s={2} $r={161}>Emprunt 3</Serif>
      <SmallSerif $c="M" $s={2} $r={159}>104315,00</SmallSerif>
      <SmallSerif $c="M" $s={2} $r={160}>91000,00</SmallSerif>
      <SmallSerif $c="M" $s={2} $r={161}>21000,00</SmallSerif>
      <Serif $c="P" $s={2} $r={159}>19345,22</Serif>
      <Serif $c="P" $s={2} $r={160}>40673,08</Serif>
      <Serif $c="P" $s={2} $r={161}>1112,25</Serif>
      <Serif $c="T" $s={2} $r={159}>123680,22</Serif>
      <Serif $c="T" $s={2} $r={160}>131673,08</Serif>
      <Serif $c="T" $s={2} $r={161}>22112,25</Serif>

      <SansBold $c="D" $s={2} $r={164}>244680</SansBold>
      <SansBold $c="H" $s={2} $r={164}>28365</SansBold>
      <SansBold $c="M" $s={2} $r={164}>216315</SansBold>
      <SansBold $c="P" $s={2} $r={164}>61130,55</SansBold>
      <SansBold $c="T" $s={2} $r={164}>277465,55</SansBold>

      <StarBand $r={166}>{STARS}</StarBand>

      <SectionHead $c="A" $s={4} $r={168}>Emprunt</SectionHead>
      <SectionHead $c="M" $s={4} $r={168}>Mise à jour mensualités</SectionHead>
      <SerifItalic $c="D" $s={2} $r={169}>Montant</SerifItalic>
      <SerifItalic $c="G" $s={2} $r={169}>Mensualités</SerifItalic>
      <SerifItalic $c="J" $s={2} $r={169}>Échéances</SerifItalic>
      <Sans $c="D" $s={2} $r={170}>104315</Sans>
      <Sans $c="D" $s={2} $r={171}>91000</Sans>
      <Sans $c="D" $s={2} $r={172}>21000</Sans>

      <SerifItalic $c="P" $s={2} $r={170}>Reste à payer</SerifItalic>
      <Serif $c="S" $s={2} $r={170}>Mensualités</Serif>
      <Serif $c="V" $s={2} $r={170}>Remb.</Serif>
      <Serif $c="X" $s={2} $r={170}>Intérêts</Serif>
      <RuleCell $c="X" $r={171} $rs={3} />
      {CREDIT_ROWS.map(([r, name, left, monthly, remb, interest], i) => (
        <React.Fragment key={r}>
          <CreditLabel $c="M" $s={3} $r={r}>{name}</CreditLabel>
          <CreditBox $c="P" $s={2} $r={r} $top={i === 0}>{left}</CreditBox>
          <Serif $c="R" $r={r}>-&gt;</Serif>
          <Serif $c="S" $s={2} $r={r}>{monthly}</Serif>
          <Serif $c="U" $r={r}>-&gt;</Serif>
          <Serif $c="V" $s={2} $r={r}>{remb}</Serif>
          <Serif $c="X" $s={2} $r={r}>{interest}</Serif>
        </React.Fragment>
      ))}

      <StarBand $r={176}>{STARS}</StarBand>

      <SectionHead $c="A" $s={4} $r={178}>Remboursement assurance maison</SectionHead>
      <Sans $c="F" $s={2} $r={179}>A recevoir</Sans>
      <Sans $c="I" $s={2} $r={179}>Reçu</Sans>
      <UnderlinedSerif $c="L" $s={2} $r={179}>Reste</UnderlinedSerif>
      {REFUND_ROWS.map(([r, label, due, got]) => (
        <React.Fragment key={r}>
          <Sans $c="C" $s={3} $r={r}>{label}</Sans>
          <Sans $c="F" $s={2} $r={r}>{due}</Sans>
          <Sans $c="I" $s={2} $r={r}>{got}</Sans>
        </React.Fragment>
      ))}
      <SansBold $c="F" $s={2} $r={188} $rs={2}>4062,07</SansBold>
      <SansBold $c="I" $s={2} $r={188} $rs={2}>2348,66</SansBold>
      <SansBold $c="L" $s={2} $r={188} $rs={2}>1713,41</SansBold>
    </SheetGrid>
  );
}

export default function PierreCalc() {
  return (
    <App>
      <GlobalStyle />
      <TitleBar>
        Pierre.ods - LibreOffice Calc
        <WindowButtons>
          <WinButton>
            <svg width="11" height="11" viewBox="0 0 11 11"><path d="M1 9h8" stroke="#fff" strokeWidth="1.500" /></svg>
          </WinButton>
          <WinButton>
            <svg width="11" height="11" viewBox="0 0 11 11"><path d="M1.500 3.500h6v6h-6zM4 3V1.500h6v6H8" fill="none" stroke="#fff" /></svg>
          </WinButton>
          <WinButton $close><CloseMark /></WinButton>
        </WindowButtons>
      </TitleBar>
      <MenuBar>
        {["Fichier", "Édition", "Affichage", "Insertion", "Format", "Styles", "Feuille", "Données", "Outils", "Fenêtre", "Aide"].map((m) => (
          <MenuItem key={m}>{m}</MenuItem>
        ))}
        <CloseDoc><CloseMark c="#eeeeee" /></CloseDoc>
      </MenuBar>
      <ToolbarTop />
      <ToolbarBottom />
      <Workspace>
        <Main>
          <FormulaBar>
            <Combo $w={157} $mt={-1}>
              <ComboText $pl={10} $h={31}>AA37</ComboText>
              <ComboButton />
            </Combo>
            <FormulaSep $w={7} />
            <FxButton $w={27}><Glyph $size={17} $font={SERIF}>fx</Glyph></FxButton>
            <FxButton $w={22}><Glyph $size={18}>Σ</Glyph></FxButton>
            <Drop $w={16} />
            <FxButton $w={20}><Glyph $size={18}>=</Glyph></FxButton>
            <FormulaSep $w={10} />
            <FormulaInput />
            <FormulaDrop />
          </FormulaBar>
          <ColHeaderRow>
            <Corner />
            {COLUMNS.map(([name, w]) => (
              <ColLabel key={name} $w={w} $on={name === "AA"}>{name}</ColLabel>
            ))}
            <SplitHandle />
          </ColHeaderRow>
          <SheetArea>
            <RowHeaders>
              {ROW_NUMBERS.map((n) => (
                <RowLabel key={n} $h={rowHeight(n)}>{n}</RowLabel>
              ))}
            </RowHeaders>
            <Sheet><SheetContent /></Sheet>
            <VScroll><VThumb /></VScroll>
          </SheetArea>
          <HScrollRow>
            <HThumb />
            <HHandle />
          </HScrollRow>
          <TabBar>
            <TabNav>
              <NavButton $w={24}><NavIcon d="M1 1h2v14H1zM11 1v14L4 8z" /></NavButton>
              <NavButton $w={25}><NavIcon d="M9 1v14L2 8z" /></NavButton>
              <NavButton $w={25}><NavIcon d="M3 1v14l7-7z" /></NavButton>
              <NavButton $w={24}><NavIcon d="M9 1h2v14H9zM1 1v14l7-7z" /></NavButton>
              <AddTab>
                <svg width="18" height="18" viewBox="0 0 18 18"><path d="M7.500 0h3v7.500H18v3h-7.500V18h-3v-7.500H0v-3h7.500z" fill="#f4f4f4" /></svg>
              </AddTab>
            </TabNav>
            {TAB_NAMES.map((t) => (
              <Tab key={t} $active={t === "Fric_en_cours"}>{t}</Tab>
            ))}
          </TabBar>
        </Main>
        <RightStrip><DeckHandle /></RightStrip>
      </Workspace>
      <StatusBar>
        <StatusCell $w={243} $pl={11}>Feuille 7 sur 9</StatusCell>
        <StatusCell $w={343} />
        <StatusCell $w={189} $pl={9}>mp1</StatusCell>
        <StatusCell $w={256} $center>Français (France)</StatusCell>
        <StatusCell $w={96} $pl={72}>
          <svg width="14" height="14" viewBox="0 0 14 14"><path d="M3 1h4M3 13h4M5 1v12M9 12h4" stroke="#8c8c8c" fill="none" /></svg>
        </StatusCell>
        <StatusCell $w={30} $center>
          <svg width="12" height="12" viewBox="0 0 12 12"><rect width="12" height="12" fill="#c4c4c4" /><path d="M4 2h4v4h2L6 10 2 6h2z" fill="#333" /></svg>
        </StatusCell>
        <StatusCell $w={28} />
        <StatusCell $w={302} $center>Moyenne: ; Somme: 0</StatusCell>
        <StatusCell $w={142} $pl={8}>
          <ZoomSign>−</ZoomSign>
          <ZoomTrack><ZoomKnob /></ZoomTrack>
          <ZoomSign>+</ZoomSign>
        </StatusCell>
        <StatusCell $w={53} $pl={8} $fs={12.5}>100 %</StatusCell>
      </StatusBar>
    </App>
  );
}
